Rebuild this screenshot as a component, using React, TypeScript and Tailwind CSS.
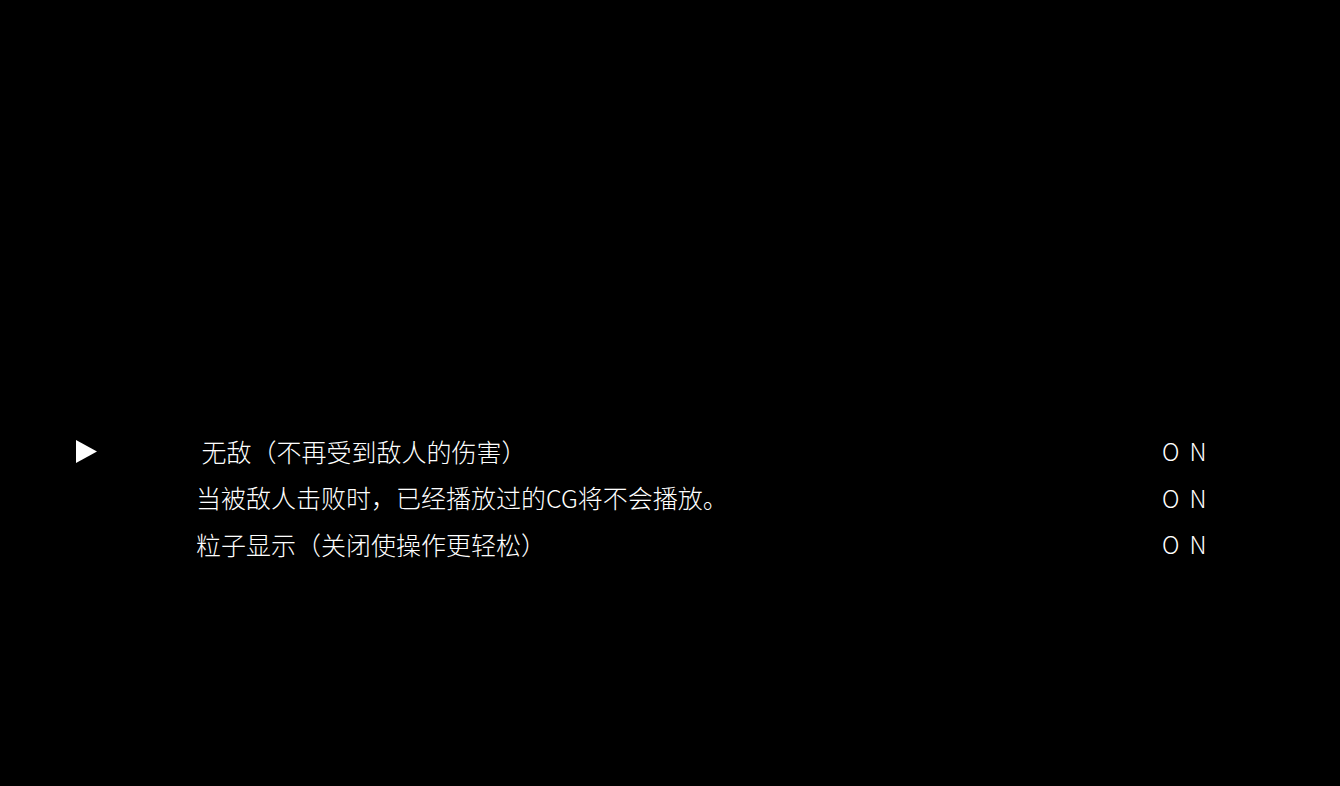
const rows = [
  { label: ' 无敌（不再受到敌人的伤害）', value: 'ON', selected: true },
  { label: '当被敌人击败时，已经播放过的CG将不会播放。', value: 'ON', selected: false },
  { label: '粒子显示（关闭使操作更轻松）', value: 'ON', selected: false },
];

export default function App() {
  return (
    <div
      className="w-[1340px] h-[786px] bg-black text-white pt-[428px] font-extralight"
      style={{ fontFamily: '"Noto Sans CJK SC", "Noto Sans", sans-serif' }}
    >
      <div className="flex flex-col">
        {rows.map((row, i) => (
          <div key={i} className="flex items-center h-[46.5px]">
            <div className="w-[196px] pl-[76px] flex items-center">
              {row.selected && (
                <svg width="21" height="23" viewBox="0 0 21 23">
                  <polygon points="0,0 21,11.5 0,23" fill="#fff" />
                </svg>
              )}
            </div>
            <div className="flex-1 text-[25px] leading-none whitespace-pre">{row.label}</div>
            <div className="w-[178px] text-[24px] leading-none tracking-[10px]">{row.value}</div>
          </div>
        ))}
      </div>
    </div>
  );
}
